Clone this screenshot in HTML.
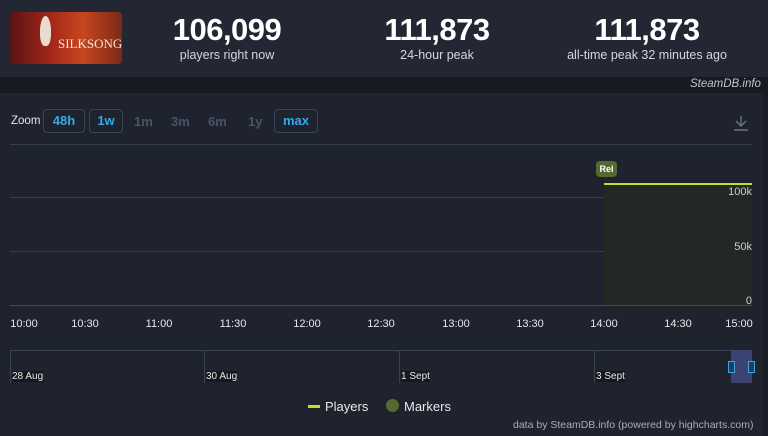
<!DOCTYPE html><html><head><style>
*{margin:0;padding:0;box-sizing:border-box}
body{width:768px;height:436px;background:#1f232d;font-family:"Liberation Sans",sans-serif;position:relative;overflow:hidden;color:#fff}
.a{position:absolute}
.hdr{left:0;top:0;width:768px;height:77px;background:#222733}
.band{left:0;top:77px;width:768px;height:16px;background:#171a21}
.num{font-weight:bold;font-size:31px;text-align:center;width:200px;letter-spacing:-0.5px}
.lbl{font-size:12.5px;color:#d4d7dd;text-align:center;width:240px}
.btn{top:109px;height:24px;border:1px solid #3a4456;border-radius:4px;font-weight:bold;font-size:13px;color:#37a7e8;text-align:center;line-height:22px}
.dis{top:114px;font-size:13px;font-weight:bold;color:#49536a}
.grid{left:10px;width:742px;height:1px;background:#363d4b}
.xl{top:318px;font-size:11px;color:#e6e8ec;width:40px;text-align:center}
.yl{font-size:11px;color:#c8ccd4;text-align:right;width:40px}
.nl{top:371px;font-size:10px;color:#e8e8e8;background:#15181e}
.nv{top:350px;width:1px;height:33px;background:#3a4252}
</style></head><body>
<div class="a hdr"></div>
<div class="a band"></div>
<div class="a" style="left:763px;top:93px;width:5px;height:343px;background:#1a1d25"></div>
<div class="a" style="left:10px;top:12px;width:112px;height:52px;border-radius:4px;background:linear-gradient(90deg,#5a1414 0%,#a02618 35%,#c8461e 65%,#7a2a18 100%);overflow:hidden">
<div class="a" style="left:30px;top:4px;width:11px;height:30px;border-radius:50% 50% 40% 40%;background:#e8dcd0"></div>
<div class="a" style="left:48px;top:24px;font-family:'Liberation Serif',serif;font-size:13px;color:#f3e6d6">SILKSONG</div>
</div>
<div class="a num" style="left:127px;top:12px">106,099</div>
<div class="a lbl" style="left:107px;top:48px">players right now</div>
<div class="a num" style="left:337px;top:12px">111,873</div>
<div class="a lbl" style="left:317px;top:48px">24-hour peak</div>
<div class="a num" style="left:547px;top:12px">111,873</div>
<div class="a lbl" style="left:527px;top:48px">all-time peak 32 minutes ago</div>
<div class="a" style="left:690px;top:78px;font-size:11.5px;font-style:italic;color:#c2c6cd">SteamDB.info</div>
<div class="a" style="left:11px;top:115px;font-size:11.5px;color:#e6e8ec">Zoom</div>
<div class="a btn" style="left:43px;width:42px">48h</div>
<div class="a btn" style="left:89px;width:34px">1w</div>
<div class="a dis" style="left:134px">1m</div>
<div class="a dis" style="left:171px">3m</div>
<div class="a dis" style="left:208px">6m</div>
<div class="a dis" style="left:248px">1y</div>
<div class="a btn" style="left:274px;width:44px">max</div>
<svg class="a" style="left:732px;top:114px" width="18" height="18"><path d="M9 2v10M4 7l5 5 5-5M2 16h14" stroke="#6c7382" stroke-width="1.4" fill="none"/></svg>
<div class="a grid" style="top:144px"></div>
<div class="a grid" style="top:197px"></div>
<div class="a grid" style="top:251px"></div>
<div class="a grid" style="top:305px;background:#3f4758"></div>
<div class="a" style="left:604px;top:185px;width:148px;height:120px;background:#232825"></div>
<div class="a" style="left:604px;top:183px;width:148px;height:2px;background:#c5e023"></div>
<div class="a" style="left:596px;top:161px;width:21px;height:16px;border-radius:4px;background:#566a30;font-size:9px;font-weight:bold;color:#fff;text-align:center;line-height:16px">Rel</div>
<div class="a yl" style="left:712px;top:186px">100k</div>
<div class="a yl" style="left:712px;top:241px">50k</div>
<div class="a yl" style="left:712px;top:295px">0</div>
<div class="a xl" style="left:4px">10:00</div>
<div class="a xl" style="left:65px">10:30</div>
<div class="a xl" style="left:139px">11:00</div>
<div class="a xl" style="left:213px">11:30</div>
<div class="a xl" style="left:287px">12:00</div>
<div class="a xl" style="left:361px">12:30</div>
<div class="a xl" style="left:436px">13:00</div>
<div class="a xl" style="left:510px">13:30</div>
<div class="a xl" style="left:584px">14:00</div>
<div class="a xl" style="left:658px">14:30</div>
<div class="a xl" style="left:719px">15:00</div>
<div class="a" style="left:10px;top:350px;width:742px;height:1px;background:#3a4252"></div>
<div class="a nv" style="left:10px"></div><div class="a nv" style="left:204px"></div><div class="a nv" style="left:399px"></div><div class="a nv" style="left:594px"></div>
<div class="a nl" style="left:12px">28 Aug</div>
<div class="a nl" style="left:206px">30 Aug</div>
<div class="a nl" style="left:401px">1 Sept</div>
<div class="a nl" style="left:596px">3 Sept</div>
<div class="a" style="left:731px;top:350px;width:21px;height:33px;background:#3b4470"></div>
<div class="a" style="left:728px;top:361px;width:7px;height:12px;border:1px solid #37a7e8;background:#2a3a55"></div>
<div class="a" style="left:748px;top:361px;width:7px;height:12px;border:1px solid #37a7e8;background:#2a3a55"></div>
<div class="a" style="left:308px;top:405px;width:12px;height:3px;background:#c5e023"></div>
<div class="a" style="left:325px;top:399px;font-size:13px;color:#e6e8ec">Players</div>
<div class="a" style="left:386px;top:399px;width:13px;height:13px;border-radius:50%;background:#566a30"></div>
<div class="a" style="left:404px;top:399px;font-size:13px;color:#e6e8ec">Markers</div>
<div class="a" style="left:513px;top:419px;font-size:10.5px;color:#a8adb6">data by SteamDB.info (powered by highcharts.com)</div>
</body></html>
